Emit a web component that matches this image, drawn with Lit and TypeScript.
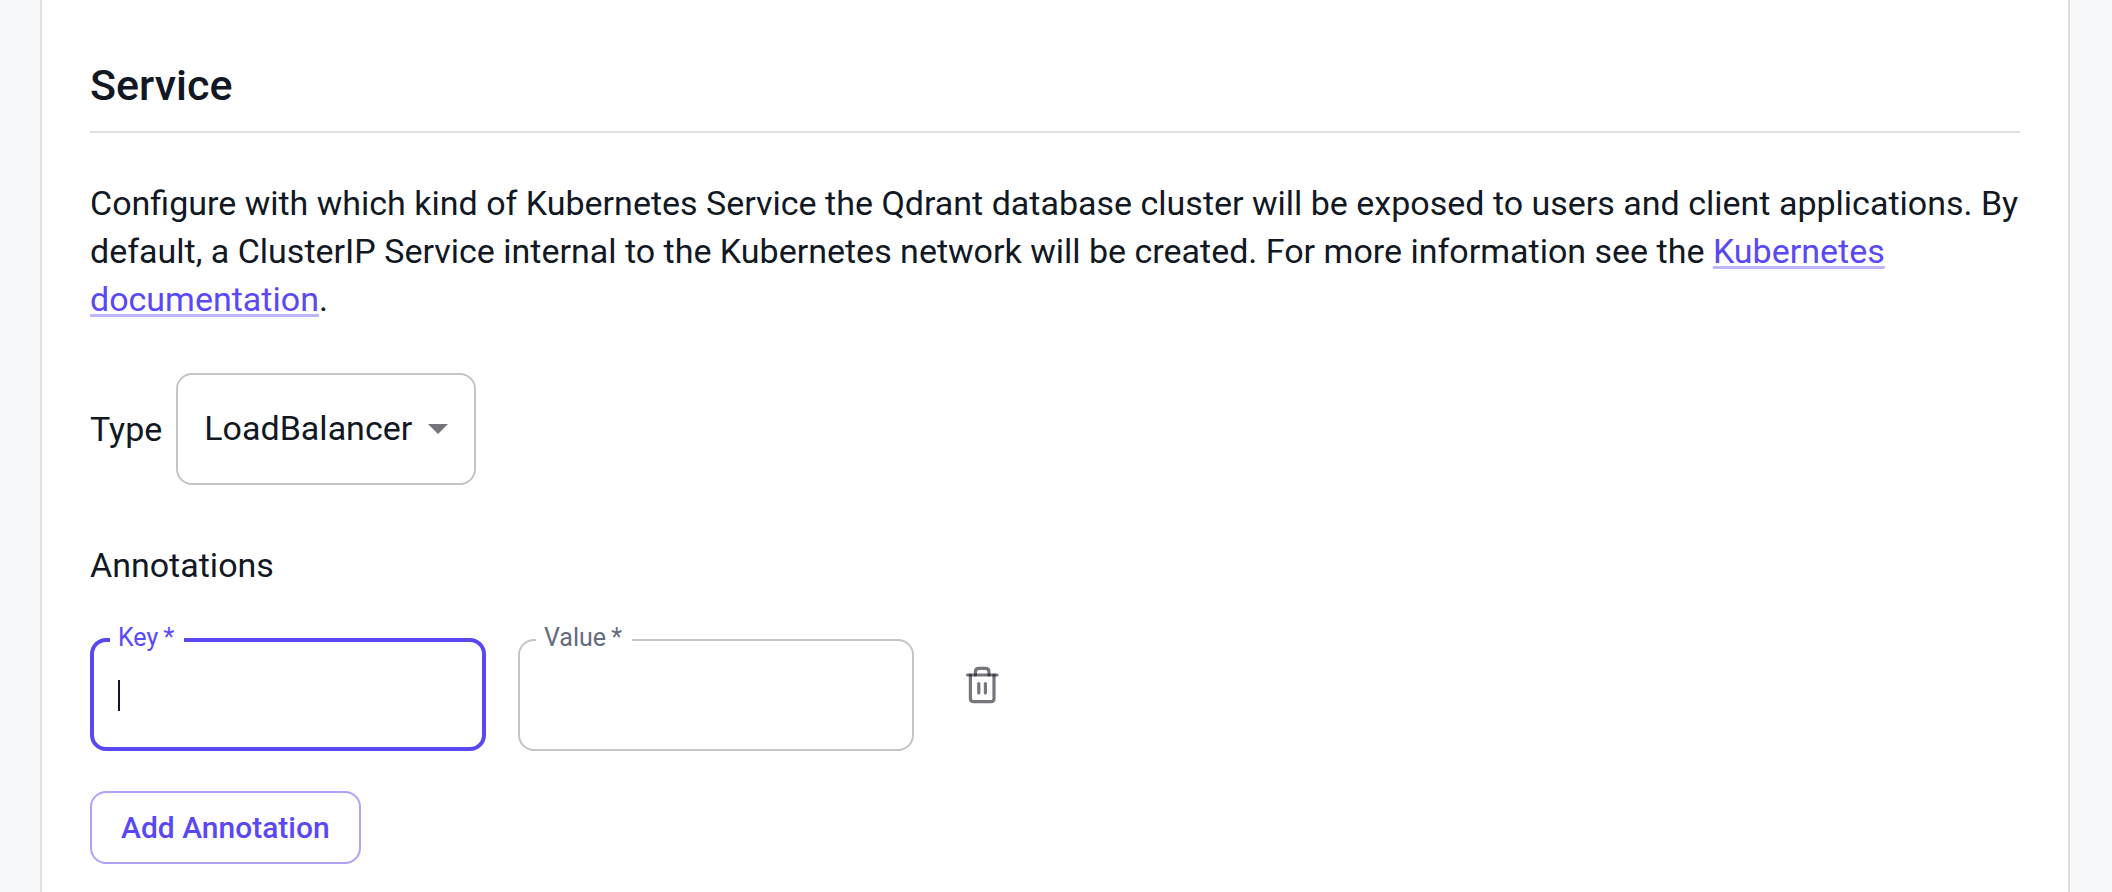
import { LitElement, html, css } from "lit";
import { customElement, property, state } from "lit/decorators.js";
import { classMap } from "lit/directives/class-map.js";

@customElement("outlined-field")
class OutlinedField extends LitElement {
  @property() label = "";
  @property() value = "";
  @property({ type: Boolean, reflect: true }) active = false;

  static styles = css`
    :host {
      display: block;
      width: 396px;
    }
    .outline {
      box-sizing: border-box;
      position: relative;
      min-width: 0;
      height: 126px;
      margin: 0;
      padding: 0 16px;
      border: 2px solid #c4c4c4;
      border-radius: 16px;
      color: #656b7f;
    }
    .outline.active {
      border: 4px solid #5b48f5;
      color: #5b48f5;
    }
    .legend {
      padding: 0 10px 4px 8px;
      font-size: 25px;
      line-height: 26px;
    }
    .input {
      display: block;
      box-sizing: border-box;
      width: 100%;
      height: 80px;
      padding: 0 8px;
      border: 0;
      outline: 0;
      background: transparent;
      color: #111824;
      caret-color: transparent;
      font: inherit;
    }
    .caret {
      position: absolute;
      left: 24px;
      top: 25px;
      width: 2px;
      height: 31px;
      background: #111824;
    }
  `;

  render() {
    return html`
      <fieldset class=${classMap({ outline: true, active: this.active })}>
        <legend class="legend"><label for="input">${this.label}&thinsp;*</label></legend>
        <input
          class="input"
          id="input"
          type="text"
          required
          .value=${this.value}
          @input=${(e: Event) => (this.value = (e.target as HTMLInputElement).value)}
        />
        ${this.active && !this.value ? html`<span class="caret"></span>` : ""}
      </fieldset>
    `;
  }
}

@customElement("app-root")
class AppRoot extends LitElement {
  @state() private type = "LoadBalancer";

  static styles = css`
    :host {
      display: block;
      box-sizing: border-box;
      min-height: 100vh;
      padding: 0 42px 0 40px;
      background: #f7f8fa;
      color: #111824;
      font-family: Roboto, "Liberation Sans", sans-serif;
      font-size: 34px;
      line-height: 48px;
    }
    .panel {
      box-sizing: border-box;
      min-height: 100vh;
      padding: 57px 48px 28px;
      border: solid #e0e0e0;
      border-width: 0 2px;
      background: #fff;
    }
    .title {
      margin: 0;
      padding-bottom: 18px;
      border-bottom: 2px solid #e0e0e0;
      font-size: 43px;
      line-height: 56px;
      font-weight: 500;
    }
    .text {
      margin: 46px 0 50px;
    }
    .link {
      color: #5b48f5;
      text-decoration-color: #bdb6fb;
      text-decoration-thickness: 3px;
      text-underline-offset: 3px;
      text-decoration-skip-ink: none;
    }
    .type {
      display: flex;
      align-items: center;
      gap: 14px;
    }
    .select-box {
      display: grid;
      align-items: center;
    }
    .select {
      grid-area: 1 / 1;
      appearance: none;
      box-sizing: border-box;
      width: 300px;
      height: 112px;
      padding: 0 26px 2px;
      border: 2px solid #c4c4c4;
      border-radius: 16px;
      background: #fff;
      color: inherit;
      font: inherit;
    }
    .arrow {
      grid-area: 1 / 1;
      justify-self: end;
      width: 20px;
      height: 10px;
      margin-right: 28px;
      pointer-events: none;
      fill: #74757c;
    }
    .subtitle {
      margin: 56px 0 36px;
      font-size: 34px;
      line-height: 48px;
      font-weight: 400;
    }
    .row {
      display: flex;
      gap: 32px;
      margin-bottom: 40px;
    }
    .delete {
      display: grid;
      place-items: center;
      width: 72px;
      height: 72px;
      margin-top: 24px;
      padding: 0;
      border: 0;
      border-radius: 50%;
      background: none;
    }
    .trash {
      width: 40px;
      height: 40px;
      fill: none;
      stroke: rgba(10, 12, 24, 0.56);
      stroke-width: 3.2;
      stroke-linecap: round;
      stroke-linejoin: round;
    }
    .add {
      display: block;
      height: 73px;
      padding: 0 29px;
      border: 2px solid #ada3fa;
      border-radius: 16px;
      background: #fff;
      color: #5b48f5;
      font-family: Roboto, sans-serif;
      font-size: 30px;
      font-weight: 500;
    }
  `;

  render() {
    return html`
      <main class="panel">
        <h2 class="title">Service</h2>
        <p class="text">
          Configure with which kind of Kubernetes Service the Qdrant database cluster will be
          exposed to users and client applications. By default, a ClusterIP Service internal to the
          Kubernetes network will be created. For more information see the
          <a class="link" href="#docs">Kubernetes documentation</a>.
        </p>
        <div class="type">
          <label for="type">Type</label>
          <div class="select-box">
            <select
              class="select"
              id="type"
              .value=${this.type}
              @change=${(e: Event) => (this.type = (e.target as HTMLSelectElement).value)}
            >
              <option>LoadBalancer</option>
            </select>
            <svg class="arrow" viewBox="0 0 20 10" aria-hidden="true"><path d="M0 0h20L10 10z" /></svg>
          </div>
        </div>
        <h3 class="subtitle">Annotations</h3>
        <div class="row">
          <outlined-field label="Key" active></outlined-field>
          <outlined-field label="Value"></outlined-field>
          <button class="delete" type="button" aria-label="Delete annotation">
            <svg class="trash" viewBox="0 0 40 40" aria-hidden="true">
              <path d="M5.500 10H35" />
              <path d="M8.400 10V33.500Q8.400 36.700 11.600 36.700H28.800Q32 36.700 32 33.500V10" />
              <path d="M13.400 10V7Q13.400 3.400 17 3.400H23.400Q27 3.400 27 7V10" />
              <path d="M16.800 18.500V28M23.400 18.500V28" />
            </svg>
          </button>
        </div>
        <button class="add" type="button">Add Annotation</button>
      </main>
    `;
  }
}
